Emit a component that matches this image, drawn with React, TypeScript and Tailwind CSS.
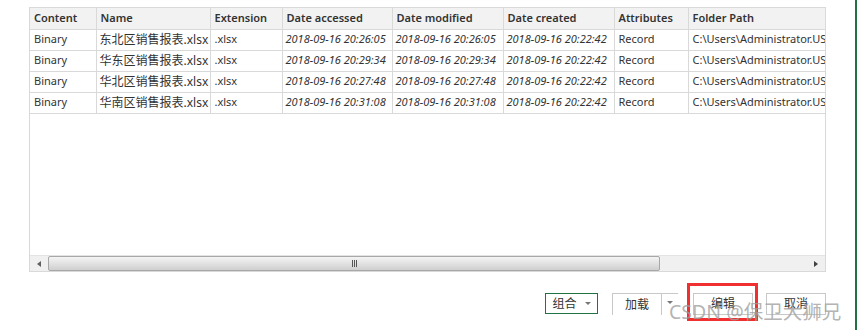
const cols = [
  { key: "content", title: "Content", w: 66 },
  { key: "name", title: "Name", w: 114 },
  { key: "ext", title: "Extension", w: 72 },
  { key: "acc", title: "Date accessed", w: 110 },
  { key: "mod", title: "Date modified", w: 111 },
  { key: "cre", title: "Date created", w: 111 },
  { key: "attr", title: "Attributes", w: 74 },
  { key: "path", title: "Folder Path", w: 137 },
]

const rows = [
  { name: "东北区销售报表.xlsx", acc: "2018-09-16 20:26:05" },
  { name: "华东区销售报表.xlsx", acc: "2018-09-16 20:29:34" },
  { name: "华北区销售报表.xlsx", acc: "2018-09-16 20:27:48" },
  { name: "华南区销售报表.xlsx", acc: "2018-09-16 20:31:08" },
]

const font = { fontFamily: '"Noto Sans", "Noto Sans CJK SC", sans-serif' }

export default function App() {
  return (
    <div
      className="relative w-[857px] h-[330px] bg-white border-r-2 border-[#217346] overflow-hidden text-[11px] text-[#333]"
      style={font}
    >
      <div className="ml-[29px] mt-[7px] w-[797px] h-[265px] border border-[#d9d9d9] flex flex-col">
        {/* table area */}
        <div className="flex-1 overflow-hidden">
          <table className="table-fixed border-collapse w-[795px]">
            <colgroup>
              {cols.map((c) => (
                <col key={c.key} style={{ width: c.w }} />
              ))}
            </colgroup>
            <thead>
              <tr className="h-[21px] bg-[#f2f2f2]">
                {cols.map((c, i) => (
                  <th
                    key={c.key}
                    className={`text-left font-semibold pl-[4px] whitespace-nowrap overflow-hidden border-b border-[#d9d9d9] ${
                      i > 0 ? "border-l" : ""
                    }`}
                  >
                    {c.title}
                  </th>
                ))}
              </tr>
            </thead>
            <tbody>
              {rows.map((r) => (
                <tr key={r.name} className="h-[21px]">
                  <td className="pl-[4px] border-b border-[#d9d9d9] whitespace-nowrap">Binary</td>
                  <td className="pl-[3px] border-b border-l border-[#d9d9d9] whitespace-nowrap overflow-hidden text-[12px]">{r.name}</td>
                  <td className="pl-[4px] border-b border-l border-[#d9d9d9] whitespace-nowrap">.xlsx</td>
                  <td className="pl-[3px] border-b border-l border-[#d9d9d9] whitespace-nowrap italic overflow-hidden">{r.acc}</td>
                  <td className="pl-[3px] border-b border-l border-[#d9d9d9] whitespace-nowrap italic overflow-hidden">{r.acc}</td>
                  <td className="pl-[3px] border-b border-l border-[#d9d9d9] whitespace-nowrap italic overflow-hidden">2018-09-16 20:22:42</td>
                  <td className="pl-[4px] border-b border-l border-[#d9d9d9] whitespace-nowrap">Record</td>
                  <td className="pl-[4px] border-b border-l border-[#d9d9d9] whitespace-nowrap overflow-hidden">C:\Users\Administrator.US</td>
                </tr>
              ))}
            </tbody>
          </table>
        </div>

        {/* horizontal scrollbar */}
        <div className="h-[16px] flex bg-[#f0f0f0] border-t border-[#e3e3e3]">
          <div className="w-[18px] flex items-center justify-center">
            <div className="w-0 h-0 border-y-[3px] border-y-transparent border-r-[4px] border-r-[#606060]" />
          </div>
          <div className="w-[612px] flex items-center justify-center rounded-[2px] border border-[#a8a8a8] bg-gradient-to-b from-[#f4f4f4] via-[#e2e2e2] to-[#cfcfcf]">
            <div className="flex gap-[1px]">
              <div className="w-[1px] h-[7px] bg-[#555]" />
              <div className="w-[1px] h-[7px] bg-[#555]" />
              <div className="w-[1px] h-[7px] bg-[#555]" />
            </div>
          </div>
          <div className="flex-1" />
          <div className="w-[18px] flex items-center justify-center">
            <div className="w-0 h-0 border-y-[3px] border-y-transparent border-l-[4px] border-l-[#404040]" />
          </div>
        </div>
      </div>

      {/* buttons */}
      <div className="mt-[21px] w-[826px] flex justify-end items-start text-[12px]">
        <div className="w-[53px] h-[21px] border border-[#217346] flex items-center justify-center gap-[8px] text-[#333]">
          <span>组合</span>
          <div className="w-0 h-0 border-x-[3px] border-x-transparent border-t-[3px] border-t-[#777]" />
        </div>
        <div className="ml-[14px] w-[66px] h-[22px] border-l border-t border-[#c8c8c8] flex">
          <div className="w-[49px] flex items-center justify-center border-r border-[#c8c8c8]">加载</div>
          <div className="flex-1 flex items-start justify-center pt-[7px]">
            <div className="w-0 h-0 border-x-[3px] border-x-transparent border-t-[3px] border-t-[#777]" />
          </div>
        </div>
        <div className="ml-[15px] w-[60px] h-[22px] border border-[#c8c8c8] flex items-center justify-center">编辑</div>
        <div className="ml-[13px] w-[60px] h-[22px] border border-[#c8c8c8] flex items-center justify-center">取消</div>
      </div>

      {/* annotation box */}
      <div className="absolute left-[687px] top-[283px] w-[71px] h-[38px] border-[3px] border-[#f03030]" />

      {/* watermark */}
      <div className="absolute left-[669px] top-[299px] text-[19.5px] leading-[26px] text-[#a0a0a0]/80 whitespace-nowrap">
        CSDN @保卫大狮兄
      </div>
    </div>
  )
}
